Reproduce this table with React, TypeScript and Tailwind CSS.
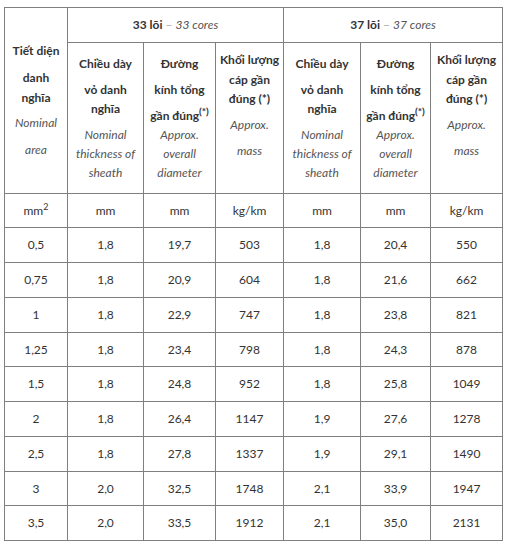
const rows = [
  ['0,5', '1,8', '19,7', '503', '1,8', '20,4', '550'],
  ['0,75', '1,8', '20,9', '604', '1,8', '21,6', '662'],
  ['1', '1,8', '22,9', '747', '1,8', '23,8', '821'],
  ['1,25', '1,8', '23,4', '798', '1,8', '24,3', '878'],
  ['1,5', '1,8', '24,8', '952', '1,8', '25,8', '1049'],
  ['2', '1,8', '26,4', '1147', '1,9', '27,6', '1278'],
  ['2,5', '1,8', '27,8', '1337', '1,9', '29,1', '1490'],
  ['3', '2,0', '32,5', '1748', '2,1', '33,9', '1947'],
  ['3,5', '2,0', '33,5', '1912', '2,1', '35,0', '2131'],
];

// row heights measured from the screenshot
const rowHeights = ['h-[35px]', 'h-[35px]', 'h-[35px]', 'h-[34px]', 'h-[35px]', 'h-[35px]', 'h-[35px]', 'h-[34px]', 'h-[35px]'];

const cell = 'border border-[#7f7f7f] p-0 text-center';
const line = 'h-[19px] leading-[19px] whitespace-nowrap';
const bold = `${line} font-bold text-[#333]`;
const em = `${line} italic text-[#555]`;

function ThicknessHead() {
  return (
    <td className={`${cell} align-top`}>
      <div className="flex flex-col pt-[11px]">
        <div className={bold}>Chiều dày</div>
        <div className={`${bold} mt-[7px]`}>vỏ danh</div>
        <div className={bold}>nghĩa</div>
        <div className={`${em} mt-[7px]`}>Nominal</div>
        <div className={em}>thickness of</div>
        <div className={em}>sheath</div>
      </div>
    </td>
  );
}

function DiameterHead() {
  return (
    <td className={`${cell} align-top`}>
      <div className="flex flex-col pt-[11px]">
        <div className={bold}>Đường</div>
        <div className={`${bold} mt-[7px]`}>kính tổng</div>
        <div className={`${bold} mt-[7px]`}>
          gần đúng<sup className="text-[10px]">(*)</sup>
        </div>
        <div className={em}>Approx.</div>
        <div className={em}>overall</div>
        <div className={em}>diameter</div>
      </div>
    </td>
  );
}

function MassHead() {
  return (
    <td className={`${cell} align-top`}>
      <div className="flex flex-col pt-[7px]">
        <div className={bold}>Khối lượng</div>
        <div className={`${bold} mt-[1px]`}>cáp gần</div>
        <div className={bold}>đúng (*)</div>
        <div className={`${em} mt-[7px]`}>Approx.</div>
        <div className={`${em} mt-[7px]`}>mass</div>
      </div>
    </td>
  );
}

export default function App() {
  return (
    <div className="h-[548px] w-[509px] bg-white pl-[4px] pt-[7px] font-['Lato',sans-serif] text-[12px] text-[#333]">
      <table className="w-[498px] table-fixed border-collapse">
        <colgroup>
          <col className="w-[63px]" />
          <col className="w-[76px]" />
          <col className="w-[72px]" />
          <col className="w-[68px]" />
          <col className="w-[77px]" />
          <col className="w-[70px]" />
          <col className="w-[72px]" />
        </colgroup>
        <thead>
          <tr className="h-[35px]">
            <td rowSpan={2} className={`${cell} align-top`}>
              <div className="flex flex-col pt-[33px]">
                <div className={bold}>Tiết diện</div>
                <div className={`${bold} mt-[8px]`}>danh</div>
                <div className={`${bold} mt-[1px]`}>nghĩa</div>
                <div className={`${em} mt-[6px]`}>Nominal</div>
                <div className={`${em} mt-[8px]`}>area</div>
              </div>
            </td>
            <td colSpan={3} className={`${cell} align-middle`}>
              <span className="font-bold text-[#333]">33 lõi</span>
              <span className="text-[#aaa]"> – </span>
              <span className="italic text-[#555]">33 cores</span>
            </td>
            <td colSpan={3} className={`${cell} align-middle`}>
              <span className="font-bold text-[#333]">37 lõi</span>
              <span className="text-[#aaa]"> – </span>
              <span className="italic text-[#555]">37 cores</span>
            </td>
          </tr>
          <tr className="h-[151px]">
            <ThicknessHead />
            <DiameterHead />
            <MassHead />
            <ThicknessHead />
            <DiameterHead />
            <MassHead />
          </tr>
        </thead>
        <tbody>
          <tr className="h-[34px]">
            <td className={cell}>
              mm<sup className="text-[9px]">2</sup>
            </td>
            <td className={cell}>mm</td>
            <td className={cell}>mm</td>
            <td className={cell}>kg/km</td>
            <td className={cell}>mm</td>
            <td className={cell}>mm</td>
            <td className={cell}>kg/km</td>
          </tr>
          {rows.map((r, i) => (
            <tr key={r[0]} className={rowHeights[i]}>
              {r.map((v, j) => (
                <td key={j} className={cell}>
                  {v}
                </td>
              ))}
            </tr>
          ))}
        </tbody>
      </table>
    </div>
  );
}
